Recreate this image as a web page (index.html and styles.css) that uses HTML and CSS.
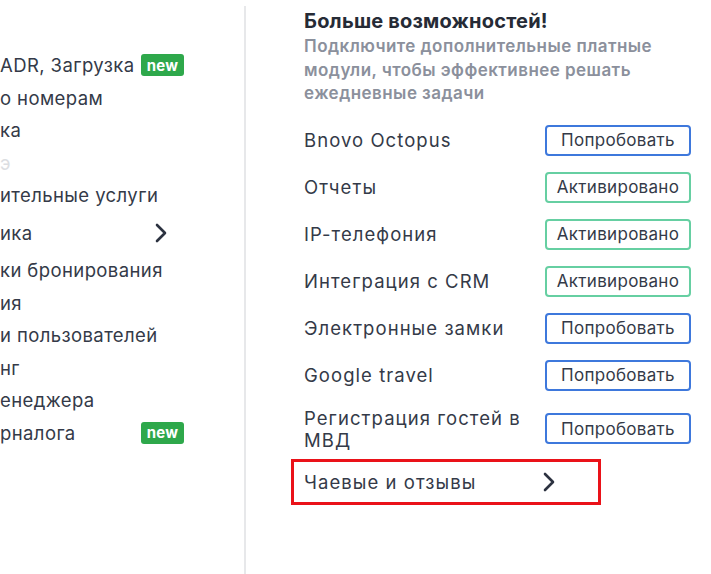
FILE: index.html
```html
<!DOCTYPE html>
<html lang="ru">
<head>
<meta charset="utf-8">
<title>Модули</title>
<link rel="stylesheet" href="styles.css">
</head>
<body>
<div class="layout">
  <nav class="side">
    <ul class="menu">
      <li class="menu-item"><span class="label">ADR, Загрузка</span><span class="badge">new</span></li>
      <li class="menu-item"><span class="label">о номерам</span></li>
      <li class="menu-item"><span class="label">ка</span></li>
      <li class="menu-item muted"><span class="label">э</span></li>
      <li class="menu-item"><span class="label">ительные услуги</span></li>
      <li class="menu-item group"><span class="label">ика</span>
        <svg class="chev" width="12" height="20" viewBox="0 0 12 20"><path d="M2 2 L10 10 L2 18" fill="none" stroke="currentColor" stroke-width="2.6" stroke-linecap="round" stroke-linejoin="round"/></svg>
      </li>
      <li class="menu-item"><span class="label">ки бронирования</span></li>
      <li class="menu-item"><span class="label">ия</span></li>
      <li class="menu-item"><span class="label">и пользователей</span></li>
      <li class="menu-item"><span class="label">нг</span></li>
      <li class="menu-item"><span class="label">енеджера</span></li>
      <li class="menu-item"><span class="label">рналога</span><span class="badge">new</span></li>
    </ul>
  </nav>

  <main class="content">
    <h2 class="title">Больше возможностей!</h2>
    <p class="subtitle">Подключите дополнительные платные модули, чтобы эффективнее решать ежедневные задачи</p>

    <ul class="modules">
      <li class="module"><span class="name">Bnovo Octopus</span><button class="btn try">Попробовать</button></li>
      <li class="module"><span class="name">Отчеты</span><button class="btn active">Активировано</button></li>
      <li class="module"><span class="name">IP-телефония</span><button class="btn active">Активировано</button></li>
      <li class="module"><span class="name">Интеграция с CRM</span><button class="btn active">Активировано</button></li>
      <li class="module"><span class="name">Электронные замки</span><button class="btn try">Попробовать</button></li>
      <li class="module"><span class="name">Google travel</span><button class="btn try">Попробовать</button></li>
      <li class="module"><span class="name narrow">Регистрация гостей в МВД</span><button class="btn try">Попробовать</button></li>
      <li class="module link"><span class="name">Чаевые и отзывы</span>
        <svg class="chev" width="12" height="20" viewBox="0 0 12 20"><path d="M2 2 L10 10 L2 18" fill="none" stroke="currentColor" stroke-width="2.6" stroke-linecap="round" stroke-linejoin="round"/></svg>
      </li>
    </ul>
  </main>
</div>
</body>
</html>
```
FILE: styles.css
```css
* { box-sizing: border-box; }

html, body {
  margin: 0;
  padding: 0;
  background: #ffffff;
}

body {
  font-family: Inter, "Noto Sans", sans-serif;
  color: #343a48;
  width: 711px;
  height: 574px;
  overflow: hidden;
}

.layout {
  display: flex;
  padding-top: 6px;
  height: 574px;
}

/* left navigation column */
.side {
  width: 246px;
  flex: none;
  border-right: 2px solid #e7e8ea;
  overflow: hidden;
}

.menu {
  list-style: none;
  margin: 0;
  padding: 43px 0 0 0;
  width: 184px;
}

.menu-item {
  display: flex;
  align-items: center;
  justify-content: space-between;
  height: 32.5px;
  font-size: 18.5px;
  letter-spacing: 0.4px;
  white-space: nowrap;
}

.menu-item.muted {
  color: #dcdee2;
}

.menu-item.group {
  height: 42.5px;
}

.menu-item .chev {
  margin-right: 17px;
  color: #2c3240;
}

.badge {
  display: inline-flex;
  align-items: center;
  justify-content: center;
  width: 43px;
  height: 22px;
  border-radius: 3px;
  background: #2ea84b;
  color: #ffffff;
  font-size: 15px;
  font-weight: 700;
  letter-spacing: 0.3px;
}

/* right content column */
.content {
  padding: 4px 0 0 58px;
  width: 445px;
}

.title {
  margin: 0;
  font-size: 20px;
  line-height: 22px;
  font-weight: 700;
  letter-spacing: 0.2px;
  color: #262b36;
}

.subtitle {
  margin: 3px 0 0 0;
  font-size: 17px;
  line-height: 23.5px;
  font-weight: 600;
  letter-spacing: 0.45px;
  color: #8b909c;
  width: 387px;
}

.modules {
  list-style: none;
  margin: 11px 0 0 0;
  padding: 0;
  width: 387px;
}

.module {
  display: flex;
  align-items: center;
  justify-content: space-between;
  padding: 8px 0;
  min-height: 47px;
  font-size: 18.5px;
  letter-spacing: 1.05px;
}

.module .name {
  line-height: 22px;
}

.module .name.narrow {
  width: 240px;
}

.btn {
  width: 146px;
  height: 31px;
  border-radius: 4px;
  background: #ffffff;
  font-family: inherit;
  font-size: 17px;
  letter-spacing: 0.3px;
  color: #343a48;
  padding: 0;
}

.btn.try {
  border: 2px solid #3e78dc;
}

.btn.active {
  border: 2px solid #66cfa2;
}

.module.link {
  margin-left: -13px;
  width: 310px;
  height: 46px;
  min-height: 0;
  padding: 0 43px 0 10px;
  border: 3px solid #ea1219;
}

.module.link .chev {
  color: #2c3240;
}
```
